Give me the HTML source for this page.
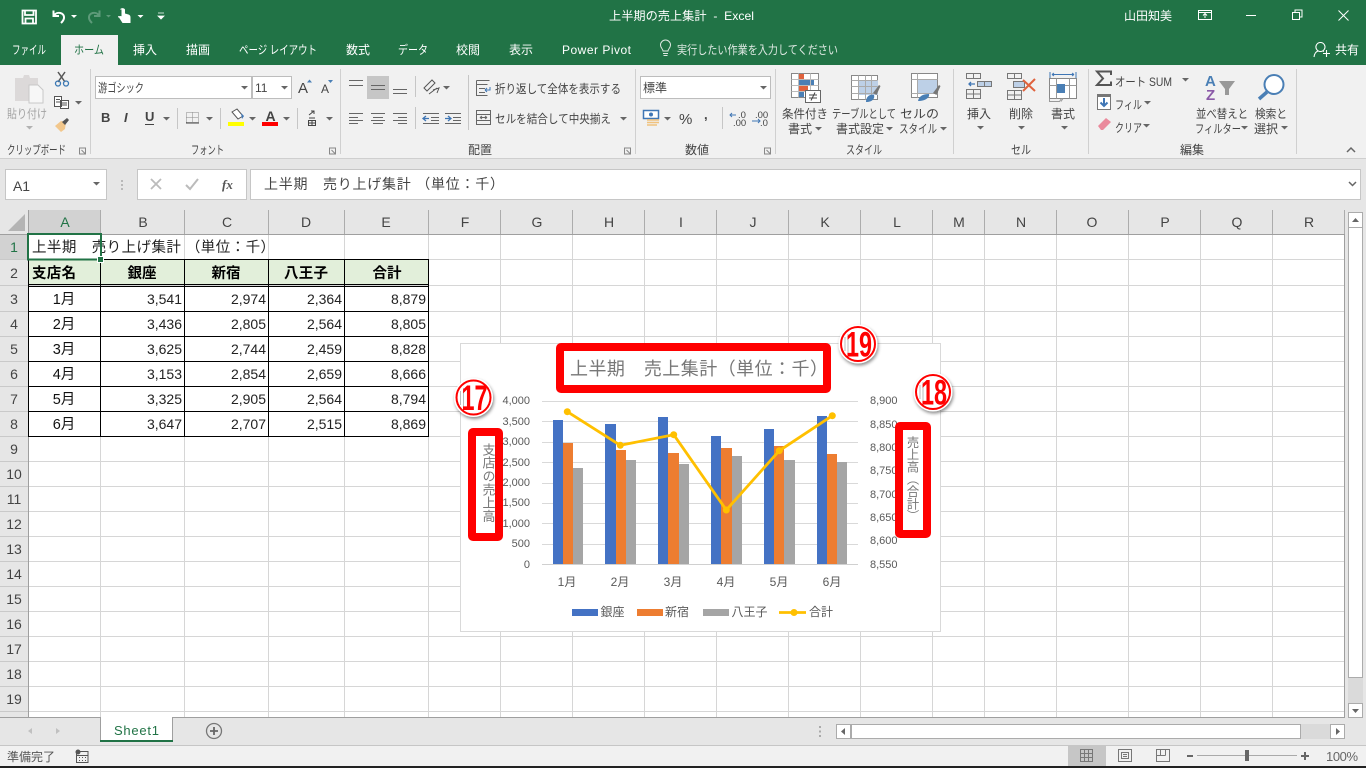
<!DOCTYPE html>
<html lang="ja"><head><meta charset="utf-8"><title>上半期の売上集計 - Excel</title>
<style>
html,body{margin:0;padding:0;background:#fff;width:1366px;height:768px;overflow:hidden}
svg{display:block;position:absolute;left:0;top:0}
text{font-family:"Liberation Sans","Noto Sans CJK JP",sans-serif;white-space:pre}
.w{fill:#fff;font-size:12px}
.t{fill:#444;font-size:12px}
.g{fill:#666;font-size:12px}
.h{fill:#444;font-size:14px;text-anchor:middle}
.c{fill:#111;font-size:14.5px}
.n{fill:#222;font-size:14px;text-anchor:end}
.m{text-anchor:middle}
.b{font-weight:bold;fill:#000}
.ax{fill:#595959;font-size:12px}
.d{fill:#595959;font-size:11px}
.v{fill:#777;font-size:13px;writing-mode:vertical-rl;text-orientation:upright}
.num{font-weight:bold;fill:#f00;font-size:35px;text-anchor:middle}
</style></head><body>
<svg width="1366" height="768" viewBox="0 0 1366 768" xmlns="http://www.w3.org/2000/svg">
<defs>
<path id="ar" d="M0 0h7l-3.500 3.500z" fill="#666"/>
<path id="la" d="M0 0h6v6h-6zM2 2l4 4M3.500 6h2.500v-2.500" fill="none" stroke="#888"/>
<filter id="sh" x="-30%" y="-30%" width="160%" height="160%"><feDropShadow dx="1" dy="2" stdDeviation="1.500" flood-color="#000" flood-opacity=".45"/></filter>
</defs>

<!-- title bar and tabs -->
<rect width="1366" height="65" fill="#217346"/>
<path d="M22.500 10.500h13.500v13h-13.500zM25 10.500v4.500h8.500v-4.500M25.500 23.500v-5h7.500v5" fill="none" stroke="#fff" stroke-width="1.800"/>
<path d="M53.500 10.500v5.500h5.500M54 15.500c3-4.500 10.500-3 10 2.500-.2 2-1.500 3.500-3 5" fill="none" stroke="#fff" stroke-width="2"/>
<path d="M71 15h6l-3 3z" fill="#fff"/>
<path d="M99.500 10.500v5.500h-5.500M99 15.500c-3-4.500-10.500-3-10 2.500.2 2 1.500 3.500 3 5" fill="none" stroke="#5d9a79" stroke-width="2"/>
<path d="M106 15h5l-2.500 2.500z" fill="#5d9a79"/>
<path d="M120 9.500a3 3 0 0 1 5 0v4l3.500 1c1.500.5 2 1.500 2 3v5.500h-8l-3.500-5.500 1-1.500 1.500 1v-7.500z" fill="#fff"/>
<path d="M118 16h7v1.500h-7z" fill="#fff" opacity=".8"/>
<path d="M137.500 15h6l-3 3z" fill="#fff"/>
<path d="M158 13h6M158 16h6l-3 3-3-3z" fill="#fff" stroke="#fff" stroke-width=".8"/>
<text class="w" x="609" y="20" textLength="145" lengthAdjust="spacingAndGlyphs">上半期の売上集計  -  Excel</text>
<text class="w" x="1124" y="20" textLength="48">山田知美</text>
<path d="M1198.500 10.500h13v9h-13zM1198.500 12.500h13M1205 18v-4M1203 15.500l2-2 2 2" fill="none" stroke="#fff"/>
<path d="M1246 15.500h10" stroke="#fff"/>
<path d="M1292.500 12.500h7v7h-7zM1295 12v-2h7v7h-2" fill="none" stroke="#fff"/>
<path d="M1338.500 10.500l10 10M1348.500 10.500l-10 10" stroke="#fff" fill="none"/>
<rect x="61" y="35" width="57" height="30" fill="#f1f1f1"/>
<text class="w" x="12" y="54" textLength="34" lengthAdjust="spacingAndGlyphs">ファイル</text>
<text class="w" x="74" y="54" textLength="30" lengthAdjust="spacingAndGlyphs" style="fill:#217346">ホーム</text>
<text class="w" x="133" y="54" textLength="24">挿入</text>
<text class="w" x="186" y="54" textLength="24">描画</text>
<text class="w" x="239" y="54" textLength="78" lengthAdjust="spacingAndGlyphs">ページ レイアウト</text>
<text class="w" x="346" y="54" textLength="24">数式</text>
<text class="w" x="398" y="54" textLength="30" lengthAdjust="spacingAndGlyphs">データ</text>
<text class="w" x="456" y="54" textLength="24">校閲</text>
<text class="w" x="509" y="54" textLength="24">表示</text>
<text class="w" x="562" y="54" textLength="69">Power Pivot</text>
<path d="M663 53.500h5M663.500 55.500h4M663 51c0-2-2.500-3-2.500-6a5 5 0 0 1 10 0c0 3-2.500 4-2.500 6z" fill="none" stroke="#dfe9e3"/>
<text class="w" x="677" y="54" textLength="161" lengthAdjust="spacingAndGlyphs" style="fill:#dfe9e3">実行したい作業を入力してください</text>
<path d="M1320 42.500a4.500 4.500 0 1 1-.1 0zM1313.500 57c.5-4 2.500-5.500 4-6M1322.500 51l1 .5M1326 50v7M1322.500 53.500h7" fill="none" stroke="#fff" stroke-width="1.100" transform="translate(.5,0)"/>
<text class="w" x="1335" y="54" textLength="24">共有</text>

<!-- ribbon -->
<rect y="65" width="1366" height="93" fill="#f1f1f1"/>
<rect y="158" width="1366" height="52" fill="#e6e6e6"/>
<path d="M0 158.500h1366" stroke="#cfcfcf"/>
<path d="M90.500 69v85M340.500 69v85M635.500 69v85M775.500 69v85M953.500 69v85M1088.500 69v85M1296.500 69v85" stroke="#d0d0d0"/>
<!-- clipboard -->
<path d="M15 78h8l1-3h5l1 3h8v23h-23z" fill="#dcd9d9"/><path d="M29 85h9l5 5v13h-14z" fill="#f7f7f7" stroke="#c8c8c8"/>
<text class="t" x="7" y="118" textLength="40" lengthAdjust="spacingAndGlyphs" style="fill:#a3a3a3">貼り付け</text>
<use href="#ar" x="26" y="126" opacity=".45"/>
<path d="M58 72l7 10M65 72l-7 10" stroke="#555" stroke-width="1.500"/><circle cx="58" cy="83.500" r="2.500" fill="none" stroke="#3a78b4" stroke-width="1.300"/><circle cx="66" cy="83.500" r="2.500" fill="none" stroke="#3a78b4" stroke-width="1.300"/>
<path d="M54.500 96.500h7v10h-7zM60.500 100.500h8v8h-8zM62 103h5M62 105h5" fill="#fff" stroke="#555"/><path d="M56 99.500h4M56 102h4" stroke="#555"/>
<use href="#ar" x="75" y="101"/>
<path d="M55 126l6 6 4-3 1-7-5-1z" fill="#f2c78c"/><path d="M62 122l5-4 2 2-4 5z" fill="#555"/>
<text class="t" x="7" y="154" textLength="59" lengthAdjust="spacingAndGlyphs">クリップボード</text>
<use href="#la" x="79.500" y="148"/>
<!-- font -->
<rect x="95.500" y="76.500" width="156" height="22" fill="#fff" stroke="#bdbdbd"/>
<rect x="252.500" y="76.500" width="39" height="22" fill="#fff" stroke="#bdbdbd"/>
<text class="t" x="98" y="92" textLength="46" lengthAdjust="spacingAndGlyphs">游ゴシック</text>
<use href="#ar" x="241" y="86"/>
<text class="t" x="255" y="92">11</text>
<use href="#ar" x="281" y="86"/>
<text class="t" x="298" y="93" style="font-size:15px">A</text><path d="M307 82.500h5l-2.500-3z" fill="#4a7fb5"/>
<text class="t" x="321" y="93" style="font-size:12px">A</text><path d="M328 80h5l-2.500 3z" fill="#4a7fb5"/>
<text class="t b" x="101" y="122" style="fill:#444;font-size:13px">B</text>
<text class="t" x="124" y="122" style="font-style:italic;font-weight:bold;font-size:13px">I</text>
<text class="t b" x="145" y="121" style="fill:#444;font-size:13px">U</text><path d="M145 124.500h9" stroke="#444"/>
<use href="#ar" x="163" y="117"/>
<path d="M177.500 108v21M220.500 108v21M297.500 108v21" stroke="#c6c6c6"/>
<path d="M186.500 112.500h12v10h-12zM192.500 112.500v10M186.500 117.500h12" fill="none" stroke="#888" stroke-dasharray="1 1"/><path d="M186 123h13" stroke="#444"/>
<use href="#ar" x="206" y="117"/>
<path d="M232 112l5-3 6 7-5 3z" fill="#fff" stroke="#555"/><path d="M241 113l3 3-2 3z" fill="#3f76b5"/>
<rect x="228" y="122" width="16" height="4" fill="#ff0"/>
<use href="#ar" x="249" y="117"/>
<text class="t" x="265.500" y="121" style="font-size:14px;font-weight:bold">A</text>
<rect x="262" y="122" width="16" height="4" fill="#f00"/>
<use href="#ar" x="283" y="117"/>
<path d="M309 115l5-4M311 111h3v3M309 118h6M308.500 120.500h7v5h-7zM312 120v5.500M308.500 123h7" fill="none" stroke="#444"/>
<use href="#ar" x="326" y="117"/>
<!-- alignment -->
<rect x="367" y="76" width="22" height="23" fill="#c6c6c6"/>
<path d="M349 80.500h14M349 85.500h14M371 85.500h14M371 89.500h14M393 89.500h14M393 93.500h14" stroke="#666"/>
<path d="M415.500 76v21M415.500 107v22M468.500 75v55" stroke="#c6c6c6"/>
<path d="M424 88l8-8 3 3-8 8zM433 90l6-2-2 5M429 94l8-6" fill="none" stroke="#555"/>
<use href="#ar" x="443" y="86"/>
<path d="M349 113.500h14M349 117.500h9M349 120.500h14M349 123.500h9M371 113.500h14M373 117.500h10M371 120.500h14M373 123.500h10M393 113.500h14M398 117.500h9M393 120.500h14M398 123.500h9" stroke="#666"/>
<path d="M423 113.500h16M431 117.500h8M431 120.500h8M423 123.500h16" stroke="#666"/><path d="M423 118.500h6M426 116l-3 2.500 3 2.500" stroke="#3f76b5" fill="none" stroke-width="1.300"/>
<path d="M445 113.500h16M453 117.500h8M453 120.500h8M445 123.500h16" stroke="#666"/><path d="M445 118.500h6M448 116l3 2.500-3 2.500" stroke="#3f76b5" fill="none" stroke-width="1.300"/>
<path d="M476.500 80.500h13M476.500 80.500v15h11M476.500 84.500h11M479 88.500h6M479 92.500h6" fill="none" stroke="#666"/><path d="M485 90h5v-3M485 90l2-2M485 90l2 2" stroke="#3f76b5" fill="none"/>
<text class="t" x="495" y="93" textLength="126" lengthAdjust="spacingAndGlyphs">折り返して全体を表示する</text>
<path d="M476.500 110.500h14v14h-14zM476.500 114.500h14M476.500 120.500h14M480 117.500h7M480 117.500l2-1.500M480 117.500l2 1.500M487 117.500l-2-1.500M487 117.500l-2 1.500" fill="none" stroke="#666"/>
<text class="t" x="495" y="123" textLength="116" lengthAdjust="spacingAndGlyphs">セルを結合して中央揃え</text>
<use href="#ar" x="620" y="117"/>
<text class="t" x="468" y="154" textLength="24">配置</text>
<use href="#la" x="624.500" y="148"/>
<!-- number -->
<rect x="640.500" y="76.500" width="130" height="22" fill="#fff" stroke="#bdbdbd"/>
<text class="t" x="643" y="92" textLength="24">標準</text>
<use href="#ar" x="760" y="86"/>
<rect x="643.500" y="110.500" width="15" height="8" fill="#fff" stroke="#3f76b5" stroke-width="1.500"/><circle cx="651" cy="114.500" r="2" fill="#3f76b5"/>
<path d="M647 120h12M647 122.500h12M647 125h10" stroke="#f0c27e" stroke-width="1.600"/>
<use href="#ar" x="664" y="117"/>
<text class="t" x="679" y="124" style="font-size:15px">%</text>
<text class="t b" x="704" y="119" style="fill:#444;font-size:13px">,</text>
<path d="M722.500 107v22" stroke="#c6c6c6"/>
<path d="M730 115h6M732 113l-2 2 2 2M752 121h8M758 119l2 2-2 2" fill="none" stroke="#3f76b5"/>
<text class="t" x="738" y="118" style="font-size:9.500px">.0</text><text class="t" x="733" y="126" style="font-size:9.500px">.00</text>
<text class="t" x="755" y="118" style="font-size:9.500px">.00</text><text class="t" x="760" y="126" style="font-size:9.500px">.0</text>
<text class="t" x="685" y="154" textLength="24">数値</text>
<use href="#la" x="764.500" y="148"/>
<!-- styles -->
<path d="M791.500 73.500h27v24h-27z" fill="#fff" stroke="#888"/>
<rect x="799" y="74" width="5" height="5" fill="#e0623d"/><rect x="799" y="80" width="15" height="5" fill="#4a7fb5"/><rect x="799" y="86" width="9" height="5" fill="#e0623d"/><rect x="799" y="92" width="5" height="5" fill="#4a7fb5"/>
<path d="M791.500 79.500h27M791.500 85.500h27M791.500 91.500h27M798.500 73.500v24M810.500 73.500v24" fill="none" stroke="#bbb"/>
<rect x="805.500" y="90.500" width="15" height="12" fill="#fff" stroke="#666"/><path d="M809 95h8M809 98h8M815 92.500l-4 8" stroke="#444" fill="none"/>
<text class="t" x="782" y="118" textLength="46" lengthAdjust="spacingAndGlyphs">条件付き</text>
<text class="t" x="788" y="133" textLength="24">書式</text><use href="#ar" x="815" y="127"/>
<rect x="851.500" y="75.500" width="26" height="24" fill="#fff" stroke="#888"/>
<rect x="858" y="80" width="20" height="15" fill="#bdd0e7"/>
<path d="M851.500 80.500h26M851.500 86.500h26M851.500 93.500h26M858.500 75.500v24M865.500 75.500v24M871.500 75.500v24" fill="none" stroke="#aaa"/>
<path d="M873 93l6-8 1.500 1-4 9z" fill="#777"/><path d="M866 102c0-5 3-8 8-7 1 3-1 7-8 7z" fill="#4a7fb5"/>
<text class="t" x="832" y="118" textLength="64" lengthAdjust="spacingAndGlyphs">テーブルとして</text>
<text class="t" x="836" y="133" textLength="48">書式設定</text><use href="#ar" x="886" y="127"/>
<rect x="911.500" y="73.500" width="26" height="24" fill="#fff" stroke="#888"/>
<rect x="917" y="79" width="20" height="14" fill="#bdd0e7"/>
<path d="M911.500 79.500h26M911.500 93.500h26M917.500 73.500v24" fill="none" stroke="#aaa"/>
<path d="M933 93l6-8 1.500 1-4 9z" fill="#777"/><path d="M918 101c1-5 5-7 11-7 1 3-3 7-11 7z" fill="#4a7fb5"/>
<text class="t" x="900" y="118" textLength="39" lengthAdjust="spacingAndGlyphs">セルの</text>
<text class="t" x="899" y="133" textLength="38" lengthAdjust="spacingAndGlyphs">スタイル</text><use href="#ar" x="940" y="127"/>
<text class="t" x="846" y="154" textLength="36" lengthAdjust="spacingAndGlyphs">スタイル</text>
<!-- cells -->
<path d="M966.500 73.500h14v5h-14zM973.500 73.500v5M966.500 89.500h14v9h-14zM966.500 94h14M973.500 89.500v9" fill="none" stroke="#777"/>
<rect x="977.500" y="81.500" width="14" height="5" fill="#bdd0e7" stroke="#777"/><path d="M984.500 81.500v5" stroke="#777"/>
<path d="M969 84h6M971 82l-2 2 2 2" fill="none" stroke="#3f76b5" stroke-width="1.300"/>
<text class="t" x="967" y="118" textLength="24">挿入</text><use href="#ar" x="977" y="126"/>
<path d="M1007.500 73.500h14v5h-14zM1014.500 73.500v5M1007.500 90.500h14v9h-14zM1007.500 95h14M1014.500 90.500v9" fill="none" stroke="#777"/>
<rect x="1013.500" y="81.500" width="11" height="6" fill="#bdd0e7" stroke="#777"/>
<path d="M1023 80l12 11M1035 79l-12 12" stroke="#e0623d" stroke-width="2" fill="none"/>
<text class="t" x="1009" y="118" textLength="24">削除</text><use href="#ar" x="1018" y="126"/>
<path d="M1050 72v6M1076 72v6M1052 74.500h22M1052 74.500l2-1.500M1052 74.500l2 1.500M1074 74.500l-2-1.500M1074 74.500l-2 1.500" fill="none" stroke="#3f76b5"/>
<rect x="1049.500" y="78.500" width="27" height="20" fill="#fff" stroke="#888"/>
<path d="M1049.500 85.500h27M1056.500 78.500v20M1069.500 78.500v20M1049.500 98.500v3h10l2-3M1063 98.500l-2 3" fill="none" stroke="#999"/>
<rect x="1057" y="84" width="8" height="9" fill="#4a7fb5"/>
<text class="t" x="1051" y="118" textLength="24">書式</text><use href="#ar" x="1061" y="126"/>
<text class="t" x="1011" y="154" textLength="20" lengthAdjust="spacingAndGlyphs">セル</text>
<!-- editing -->
<path d="M1111 75v-3.500h-14l6 7-6 6.500h14v-3.500" fill="none" stroke="#555" stroke-width="2"/>
<text class="t" x="1115" y="86" textLength="57" lengthAdjust="spacingAndGlyphs">オート SUM</text><use href="#ar" x="1182" y="78"/>
<rect x="1097.500" y="94.500" width="13" height="15" fill="#fff" stroke="#777"/><rect x="1097" y="94" width="14" height="3" fill="#777"/>
<path d="M1104 98v8M1100.500 102.500l3.500 3.500 3.500-3.500" fill="none" stroke="#3f76b5" stroke-width="2"/>
<text class="t" x="1115" y="109" textLength="27" lengthAdjust="spacingAndGlyphs">フィル</text><use href="#ar" x="1144" y="101"/>
<path d="M1098 126l8-8 5 4-8 8h-2z" fill="#ea8a9c"/>
<text class="t" x="1115" y="132" textLength="27" lengthAdjust="spacingAndGlyphs">クリア</text><use href="#ar" x="1143" y="124"/>
<text x="1205" y="86" style="font-size:15px;font-weight:bold;fill:#4a7fb5">A</text>
<text x="1206" y="100" style="font-size:15px;font-weight:bold;fill:#8b5aa8">Z</text>
<path d="M1219 81h16l-6 8v6l-4 0v-6z" fill="#999"/>
<text class="t" x="1196" y="118" textLength="52" lengthAdjust="spacingAndGlyphs">並べ替えと</text>
<text class="t" x="1195" y="133" textLength="46" lengthAdjust="spacingAndGlyphs">フィルター</text><use href="#ar" x="1241" y="126"/>
<circle cx="1274" cy="84.500" r="9.500" fill="#fff" stroke="#4a7fb5" stroke-width="2"/>
<path d="M1267 92l-8 7" stroke="#4a7fb5" stroke-width="3.500"/>
<text class="t" x="1255" y="118" textLength="32" lengthAdjust="spacingAndGlyphs">検索と</text>
<text class="t" x="1254" y="133" textLength="24">選択</text><use href="#ar" x="1281" y="126"/>
<text class="t" x="1180" y="154" textLength="24">編集</text>
<path d="M1347 152l4-4 4 4" fill="none" stroke="#666" stroke-width="1.500"/>
<text class="t" x="191" y="154" textLength="33" lengthAdjust="spacingAndGlyphs">フォント</text>
<use href="#la" x="329.500" y="148"/>

<!-- formula bar -->
<rect x="5.500" y="169.500" width="101" height="30" fill="#fff" stroke="#c6c6c6"/>
<text class="h" x="21.500" y="191" style="fill:#444">A1</text>
<use href="#ar" x="93" y="182"/>
<path d="M122 180v2M122 184v2M122 188v2" stroke="#aaa" stroke-width="1.500"/>
<rect x="137.500" y="169.500" width="109" height="30" fill="#fff" stroke="#c6c6c6"/>
<path d="M151 179l10 10M161 179l-10 10" stroke="#bbb" stroke-width="1.800" fill="none"/>
<path d="M186 185l4 4 8-10" stroke="#bbb" stroke-width="2" fill="none"/>
<text x="222" y="189" style="font-family:'Liberation Serif',serif;font-style:italic;font-weight:bold;font-size:13px;fill:#555">fx</text>
<rect x="250.500" y="169.500" width="1110" height="30" fill="#fff" stroke="#c6c6c6"/>
<text x="264" y="189" textLength="240" style="font-size:14px;fill:#444">上半期　売り上げ集計 （単位：千）</text>
<path d="M1349 182l3.500 3.500 3.500-3.500" fill="none" stroke="#666" stroke-width="1.500"/>

<!-- sheet -->
<rect x="0" y="210" width="1366" height="507" fill="#e6e6e6"/>
<rect x="28" y="234" width="1316" height="483" fill="#fff"/>
<rect x="28" y="210" width="72" height="24" fill="#d2d2d2"/>
<rect x="0" y="234" width="28" height="25" fill="#d2d2d2"/>
<path d="M25 231v-17l-17 17z" fill="#b4b4b4"/>
<path d="M100.500 210v24M184.500 210v24M268.500 210v24M344.500 210v24M428.500 210v24M500.500 210v24M572.500 210v24M644.500 210v24M716.500 210v24M788.500 210v24M860.500 210v24M932.500 210v24M984.500 210v24M1056.500 210v24M1128.500 210v24M1200.500 210v24M1272.500 210v24M1344.500 210v24" stroke="#acacac"/>
<path d="M100.500 234V717M184.500 234V717M268.500 234V717M344.500 234V717M428.500 234V717M500.500 234V717M572.500 234V717M644.500 234V717M716.500 234V717M788.500 234V717M860.500 234V717M932.500 234V717M984.500 234V717M1056.500 234V717M1128.500 234V717M1200.500 234V717M1272.500 234V717M28 259.500H1344M28 285.500H1344M28 311.500H1344M28 336.500H1344M28 361.500H1344M28 386.500H1344M28 411.500H1344M28 436.500H1344M28 461.500H1344M28 486.500H1344M28 511.500H1344M28 536.500H1344M28 561.500H1344M28 586.500H1344M28 611.500H1344M28 636.500H1344M28 661.500H1344M28 686.500H1344M28 711.500H1344" stroke="#d6d6d6"/>
<path d="M0 259.500h28M0 285.500h28M0 311.500h28M0 336.500h28M0 361.500h28M0 386.500h28M0 411.500h28M0 436.500h28M0 461.500h28M0 486.500h28M0 511.500h28M0 536.500h28M0 561.500h28M0 586.500h28M0 611.500h28M0 636.500h28M0 661.500h28M0 686.500h28M0 711.500h28" stroke="#c9c9c9"/>
<path d="M0 234.500H1344M28.500 210V717M1344.500 234V717M0 717.500H1344" stroke="#9f9f9f"/>
<text class="h" x="65" y="227" style="fill:#217346">A</text><text class="h" x="143" y="227">B</text><text class="h" x="227" y="227">C</text><text class="h" x="306" y="227">D</text><text class="h" x="386" y="227">E</text><text class="h" x="465" y="227">F</text><text class="h" x="537" y="227">G</text><text class="h" x="609" y="227">H</text><text class="h" x="681" y="227">I</text><text class="h" x="753" y="227">J</text><text class="h" x="825" y="227">K</text><text class="h" x="897" y="227">L</text><text class="h" x="959" y="227">M</text><text class="h" x="1021" y="227">N</text><text class="h" x="1092" y="227">O</text><text class="h" x="1165" y="227">P</text><text class="h" x="1237" y="227">Q</text><text class="h" x="1309" y="227">R</text>
<text class="h" x="14" y="252" style="fill:#217346">1</text><text class="h" x="14" y="278">2</text><text class="h" x="14" y="304">3</text><text class="h" x="14" y="329">4</text><text class="h" x="14" y="354">5</text><text class="h" x="14" y="379">6</text><text class="h" x="14" y="404">7</text><text class="h" x="14" y="429">8</text><text class="h" x="14" y="454">9</text><text class="h" x="14" y="479">10</text><text class="h" x="14" y="504">11</text><text class="h" x="14" y="529">12</text><text class="h" x="14" y="554">13</text><text class="h" x="14" y="579">14</text><text class="h" x="14" y="604">15</text><text class="h" x="14" y="629">16</text><text class="h" x="14" y="654">17</text><text class="h" x="14" y="679">18</text><text class="h" x="14" y="704">19</text>

<!-- table -->
<rect x="28" y="260" width="400" height="24" fill="#e2efda"/>
<path d="M28 259.500H429M28 284.500H429M28 286.500H429M28 311.500H429M28 336.500H429M28 361.500H429M28 386.500H429M28 411.500H429M28 436.500H429M28.500 259V437M100.500 259V437M184.500 259V437M268.500 259V437M344.500 259V437M428.500 259V437" stroke="#000" fill="none"/>
<text class="c" x="32" y="252" textLength="243" style="fill:#222">上半期　売り上げ集計 （単位：千）</text>
<text class="c b" x="32" y="278" textLength="44">支店名</text>
<text class="c b m" x="142" y="278">銀座</text><text class="c b m" x="226" y="278">新宿</text><text class="c b m" x="306" y="278" textLength="44">八王子</text><text class="c b m" x="387" y="278">合計</text>
<text class="c m" x="64" y="304">1月</text><text class="n" x="182" y="304">3,541</text><text class="n" x="266" y="304">2,974</text><text class="n" x="342" y="304">2,364</text><text class="n" x="426" y="304">8,879</text>
<text class="c m" x="64" y="329">2月</text><text class="n" x="182" y="329">3,436</text><text class="n" x="266" y="329">2,805</text><text class="n" x="342" y="329">2,564</text><text class="n" x="426" y="329">8,805</text>
<text class="c m" x="64" y="354">3月</text><text class="n" x="182" y="354">3,625</text><text class="n" x="266" y="354">2,744</text><text class="n" x="342" y="354">2,459</text><text class="n" x="426" y="354">8,828</text>
<text class="c m" x="64" y="379">4月</text><text class="n" x="182" y="379">3,153</text><text class="n" x="266" y="379">2,854</text><text class="n" x="342" y="379">2,659</text><text class="n" x="426" y="379">8,666</text>
<text class="c m" x="64" y="404">5月</text><text class="n" x="182" y="404">3,325</text><text class="n" x="266" y="404">2,905</text><text class="n" x="342" y="404">2,564</text><text class="n" x="426" y="404">8,794</text>
<text class="c m" x="64" y="429">6月</text><text class="n" x="182" y="429">3,647</text><text class="n" x="266" y="429">2,707</text><text class="n" x="342" y="429">2,515</text><text class="n" x="426" y="429">8,869</text>
<rect x="28" y="234" width="73" height="25.500" fill="none" stroke="#217346" stroke-width="2"/>
<rect x="97.500" y="256.500" width="6" height="6" fill="#217346" stroke="#fff"/>

<!-- chart -->
<rect x="460.500" y="343.500" width="480" height="288" fill="#fff" stroke="#d9d9d9"/>
<path d="M542 401.500h316M542 421.500h316M542 442.500h316M542 462.500h316M542 483.500h316M542 503.500h316M542 523.500h316M542 544.500h316" stroke="#d9d9d9"/>
<path d="M542 564.500h316" stroke="#d0d0d0"/>
<g fill="#4472c4"><rect x="553" y="420" width="10" height="144"/><rect x="605" y="424" width="11" height="140"/><rect x="658" y="417" width="10" height="147"/><rect x="711" y="436" width="10" height="128"/><rect x="764" y="429" width="10" height="135"/><rect x="817" y="416" width="10" height="148"/></g>
<g fill="#ed7d31"><rect x="563" y="443" width="10" height="121"/><rect x="616" y="450" width="10" height="114"/><rect x="668" y="453" width="11" height="111"/><rect x="721" y="448" width="11" height="116"/><rect x="774" y="446" width="10" height="118"/><rect x="827" y="454" width="10" height="110"/></g>
<g fill="#a5a5a5"><rect x="573" y="468" width="10" height="96"/><rect x="626" y="460" width="10" height="104"/><rect x="679" y="464" width="10" height="100"/><rect x="732" y="456" width="10" height="108"/><rect x="784" y="460" width="11" height="104"/><rect x="837" y="462" width="10" height="102"/></g>
<path d="M567.300 411.700L620.300 445.300 673.700 434.700 726.300 510 779.300 450.700 832.300 415.700" fill="none" stroke="#ffc000" stroke-width="2.800" stroke-linejoin="round"/>
<g fill="#ffc000"><circle cx="567.300" cy="411.700" r="3.500"/><circle cx="620.300" cy="445.300" r="3.500"/><circle cx="673.700" cy="434.700" r="3.500"/><circle cx="726.300" cy="510" r="3.500"/><circle cx="779.300" cy="450.700" r="3.500"/><circle cx="832.300" cy="415.700" r="3.500"/></g>
<g style="text-anchor:end"><text class="d" x="530" y="404">4,000</text><text class="d" x="530" y="425">3,500</text><text class="d" x="530" y="445">3,000</text><text class="d" x="530" y="466">2,500</text><text class="d" x="530" y="486">2,000</text><text class="d" x="530" y="506">1,500</text><text class="d" x="530" y="527">1,000</text><text class="d" x="530" y="547">500</text><text class="d" x="530" y="568">0</text></g>
<text class="d" x="870" y="404">8,900</text><text class="d" x="870" y="428">8,850</text><text class="d" x="870" y="451">8,800</text><text class="d" x="870" y="474">8,750</text><text class="d" x="870" y="498">8,700</text><text class="d" x="870" y="521">8,650</text><text class="d" x="870" y="544">8,600</text><text class="d" x="870" y="568">8,550</text>
<g style="text-anchor:middle"><text class="ax" x="567" y="586">1月</text><text class="ax" x="620" y="586">2月</text><text class="ax" x="673" y="586">3月</text><text class="ax" x="726" y="586">4月</text><text class="ax" x="779" y="586">5月</text><text class="ax" x="832" y="586">6月</text></g>
<rect x="572" y="609" width="26" height="7" fill="#4472c4"/><text class="ax" x="600.500" y="616">銀座</text>
<rect x="637" y="609" width="26" height="7" fill="#ed7d31"/><text class="ax" x="665" y="616">新宿</text>
<rect x="703" y="609" width="26" height="7" fill="#a5a5a5"/><text class="ax" x="731.500" y="616">八王子</text>
<path d="M779 612.500h27" stroke="#ffc000" stroke-width="2.800"/><circle cx="794" cy="612.500" r="3.500" fill="#ffc000"/><text class="ax" x="809" y="616">合計</text>

<!-- red boxes -->
<rect x="560" y="347" width="267" height="42" rx="1" fill="#fff" stroke="#f00" stroke-width="8"/>
<rect x="472" y="432" width="27" height="105" rx="1" fill="#fff" stroke="#f00" stroke-width="8"/>
<rect x="899" y="426" width="28" height="108" rx="1" fill="#fff" stroke="#f00" stroke-width="8"/>
<text x="570" y="375" textLength="258" style="font-size:18px;fill:#777">上半期　売上集計（単位：千）</text>
<text class="v" x="488" y="443" style="letter-spacing:.3px">支店の売上高</text>
<text class="v" x="912" y="436" style="font-size:12.300px">売上高（合計）</text>
<!-- number badges -->
<g filter="url(#sh)"><circle cx="858" cy="344" r="19.500" fill="#fff"/></g><circle cx="858" cy="344" r="17" fill="#fff" stroke="#f00" stroke-width="2"/><path d="M845 337v14M848 334v20" stroke="#bbb"/><text class="num" x="859" y="356.500" textLength="26" lengthAdjust="spacingAndGlyphs">19</text>
<g filter="url(#sh)"><circle cx="473.500" cy="397.500" r="19.500" fill="#fff"/></g><circle cx="473.500" cy="397.500" r="17" fill="#fff" stroke="#f00" stroke-width="2"/><path d="M460.500 391v14M463.500 388v20" stroke="#bbb"/><text class="num" x="474.500" y="410" textLength="26" lengthAdjust="spacingAndGlyphs">17</text>
<g filter="url(#sh)"><circle cx="933" cy="392" r="19.500" fill="#fff"/></g><circle cx="933" cy="392" r="17" fill="#fff" stroke="#f00" stroke-width="2"/><path d="M920 385v14M923 382v20" stroke="#bbb"/><text class="num" x="934" y="404.500" textLength="26" lengthAdjust="spacingAndGlyphs">18</text>

<!-- vertical scrollbar -->
<rect x="1345" y="210" width="21" height="535" fill="#e6e6e6"/>
<rect x="1348" y="228" width="15" height="475" fill="#dadada"/>
<rect x="1348.500" y="212.500" width="14" height="15" fill="#fff" stroke="#ababab"/>
<path d="M1352 222h7l-3.500-4z" fill="#666"/>
<rect x="1348.500" y="227.500" width="14" height="450" fill="#fff" stroke="#ababab"/>
<rect x="1348.500" y="703.500" width="14" height="14" fill="#fff" stroke="#ababab"/>
<path d="M1352 709h7l-3.500 4z" fill="#666"/>

<!-- sheet tabs -->
<rect y="718" width="1366" height="27" fill="#e6e6e6"/>
<path d="M0 717.500H1345" stroke="#9f9f9f"/>
<path d="M32 728v6l-4-3zM56 728v6l4-3z" fill="#c0c0c0"/>
<rect x="100.500" y="717" width="72" height="24" fill="#fff"/>
<path d="M100.500 717v24M172.500 717v24" stroke="#9f9f9f"/>
<rect x="100" y="740" width="73" height="2" fill="#217346"/>
<text x="114" y="735" textLength="45" style="font-size:13px;fill:#217346">Sheet1</text>
<circle cx="214" cy="731" r="7.500" fill="none" stroke="#777" stroke-width="1.300"/>
<path d="M210 731h8M214 727v8" stroke="#666" stroke-width="1.800"/>
<path d="M820 726v2M820 730.500v2M820 735v2" stroke="#aaa" stroke-width="2"/>
<rect x="836.500" y="724.500" width="14" height="14" fill="#fff" stroke="#ababab"/>
<path d="M845 728v7l-4-3.500z" fill="#666"/>
<rect x="851" y="724" width="480" height="15" fill="#dadada"/>
<rect x="851.500" y="724.500" width="449" height="14" fill="#fff" stroke="#ababab"/>
<rect x="1330.500" y="724.500" width="14" height="14" fill="#fff" stroke="#ababab"/>
<path d="M1336 728v7l4-3.500z" fill="#666"/>

<!-- status bar -->
<rect y="745" width="1366" height="21" fill="#f1f1f1"/>
<path d="M0 745.500H1366" stroke="#c6c6c6"/>
<rect y="766" width="1366" height="2" fill="#222"/>
<text class="t" x="7" y="761" textLength="48" style="fill:#555">準備完了</text>
<circle cx="78" cy="752" r="2.500" fill="#555"/>
<path d="M76.500 751.500h11.500v11h-11.500zM77 755.500h11" fill="none" stroke="#555"/>
<path d="M79 757.500h1M82 757.500h1M85 757.500h1M79 760.500h1M82 760.500h1M85 760.500h1" stroke="#555"/>
<rect x="1068" y="746" width="38" height="20" fill="#c6c6c6"/>
<path d="M1080.500 749.500h12v12h-12zM1080.500 753.500h12M1080.500 757.500h12M1084.500 749.500v12M1088.500 749.500v12" fill="none" stroke="#777"/>
<path d="M1118.500 749.500h13v12h-13zM1121.500 752.500h7v6h-7zM1123 754.500h4M1123 756.500h4" fill="none" stroke="#777"/>
<path d="M1156.500 749.500h13v12h-13zM1156.500 755.500h9M1160.500 749.500v6M1165.500 749.500v6" fill="none" stroke="#777"/>
<path d="M1187 756h6" stroke="#666" stroke-width="2"/>
<path d="M1197 755.500h100" stroke="#aaa"/>
<rect x="1245" y="750" width="4" height="11" fill="#666"/>
<path d="M1301 756h8M1305 752v8" stroke="#666" stroke-width="2"/>
<text class="t" x="1326" y="761" textLength="32" style="fill:#666;font-size:13px">100%</text>
</svg>
</body></html>
